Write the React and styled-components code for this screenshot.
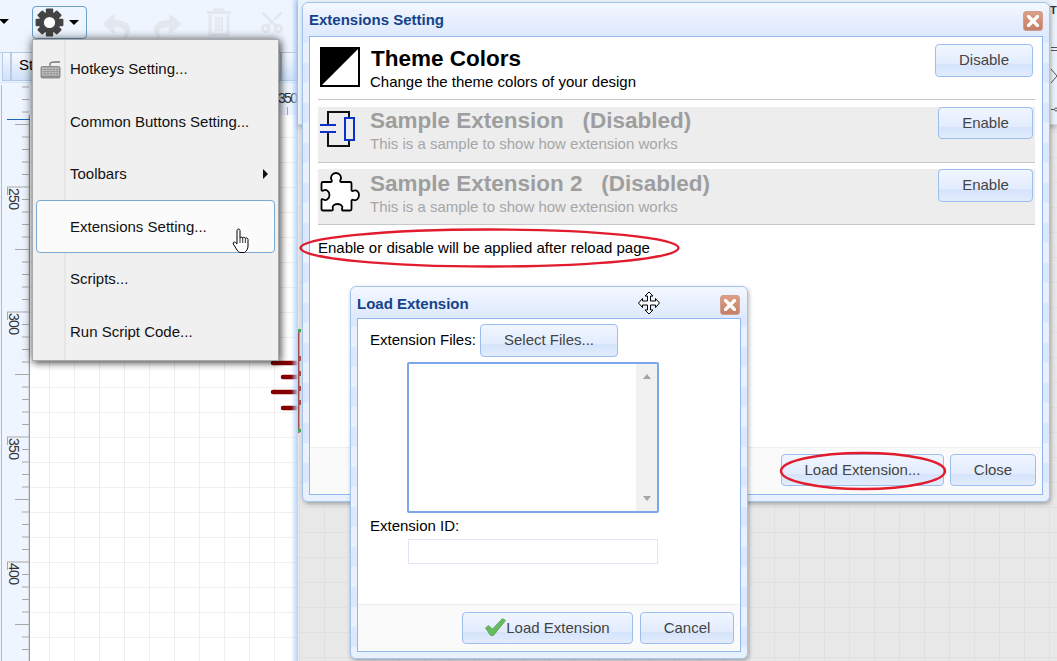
import React from "react";
import styled, { createGlobalStyle } from "styled-components";
import { FaReply, FaShare } from "react-icons/fa";
import { Scissors } from "lucide-react";

const Global = createGlobalStyle`
  html, body { margin: 0; padding: 0; overflow: hidden; background: #fff; }
  body { font-family: "Liberation Sans", Arial, sans-serif; color: #000; }
  * { box-sizing: border-box; }
`;

const Page = styled.div`
  position: relative; width: 1057px; height: 661px; overflow: hidden;
  display: flex; flex-direction: column; background: #fff;
`;

/* ---------- toolbar ---------- */
const Toolbar = styled.div`
  height: 52px; flex: none; background: #eef5ff; display: flex; align-items: flex-start;
`;
const Caret = styled.span`
  display: block; width: 0; height: 0; flex: none;
  border-left: 5px solid transparent; border-right: 5px solid transparent; border-top: 5px solid #000;
`;
const LeadCaret = styled(Caret)`margin: 19px 23px 0 -1px;`;
const GearButton = styled.div`
  width: 55px; height: 33px; margin-top: 6px; flex: none; display: flex; align-items: center; gap: 5px;
  padding-left: 2px; border: 1px solid #6d9fcb; border-radius: 4px;
`;
const ToolIcon = styled.div`
  flex: none; color: #e3e8ee; margin-left: ${(p) => p.$ml}px; margin-top: ${(p) => p.$mt}px; display: flex;
`;
const RotatedScissors = styled(Scissors)`transform: rotate(-90deg);`;

/* ---------- tabs ---------- */
const TabStrip = styled.div`
  height: 33px; flex: none; display: flex; background: linear-gradient(#e9f2ff 0 29px, #d9e7fb 29px 30px, #eef5ff 30px);
  border-top: 1px solid #b5cbe8; padding-left: 2px;
`;
const TabCell = styled.div`
  height: 28px; flex: none; width: ${(p) => p.$w}px; border-left: 1px solid #b5cbe8; border-right: 1px solid #b5cbe8;
  border-bottom: 1px solid #b5cbe8; background: linear-gradient(#f7faff, #cfe1f9);
  font-size: 15px; line-height: 24px; padding-left: 7px; white-space: nowrap; overflow: hidden;
`;

/* ---------- rulers & canvas ---------- */
const TopRuler = styled.div`
  height: 30px; flex: none; background: #eef5ff; padding-left: 2px; display: flex;
`;
const Work = styled.div`flex: 1; display: flex; min-height: 0; margin-top: 0;`;
const SideRuler = styled.div`
  width: 30px; flex: none; background: #eef5ff; margin-top: -30px; height: 576px; padding-left: 1px;
`;
const Canvas = styled.div`
  position: relative; flex: 1; background-color: #fff;
  background-image: linear-gradient(90deg, #eeeeee 1px, transparent 1px), linear-gradient(#f0f0f0 1px, transparent 1px);
  background-size: 25px 25px; background-position: 19px 22px;
`;
const Symbol = styled.svg`position: absolute; left: 240px; top: 210px;`;
const Glow = styled.div`
  position: absolute; left: 291px; top: 0; width: 7px; height: 661px;
  background: linear-gradient(90deg, rgba(184,212,251,0), #b4d2fb);
`;

function VerticalRuler() {
  const ticks = [];
  for (let i = -3; i < 48; i++) {
    const y = 62 + i * 12.5 - 85;
    const kind = ((i % 10) + 10) % 10;
    const x1 = kind === 0 ? 6 : kind === 5 ? 14 : 21;
    ticks.push(<line key={i} x1={x1} x2="28" y1={y} y2={y} stroke="#a8a8a8" strokeWidth="1" />);
  }
  const labels = [[250, 187], [300, 312], [350, 437], [400, 562]];
  return (
    <svg width="29" height="576" viewBox="0 0 29 576">
      <line x1="0.5" x2="0.5" y1="0" y2="576" stroke="#a9bdd9" />
      <line x1="28.5" x2="28.5" y1="30" y2="576" stroke="#9a9a9a" strokeWidth="1.5" />
      <line x1="6" x2="29" y1="34.5" y2="34.5" stroke="#1a66b8" />
      {ticks}
      {labels.map(([t, y]) => (
        <g key={t}>
          <line x1="6.5" x2="6.5" y1={y - 85} y2={y - 77} stroke="#a8a8a8" />
          <text x="0" y="0" fontSize="14" fontFamily="Liberation Sans" fill="#333"
            transform={`translate(8 ${y - 84}) rotate(90)`} textLength="22">{t}</text>
        </g>
      ))}
    </svg>
  );
}

/* ---------- mask behind dialogs ---------- */
const Mask = styled.div`
  position: absolute; left: 298px; top: 0; right: 0; bottom: 0; background-color: #e8e8e8;
  background-image: linear-gradient(90deg, #e0e0e0 1px, transparent 1px), linear-gradient(#e0e0e0 1px, transparent 1px);
  background-size: 25px 25px; background-position: 1px 7px;
`;
const BackPanel = styled.div`
  height: 125px; background: #eaf2fc; border-bottom: 1px solid #cfd9e6; box-shadow: 0 3px 5px rgba(0,0,0,.22);
  display: flex; justify-content: flex-end; overflow: hidden;
`;
const BackTools = styled.div`
  width: 7px; padding-top: 4px; font-size: 11px; font-weight: bold; color: #333; line-height: 13px;
  display: flex; flex-direction: column; flex: none;
`;

/* ---------- windows ---------- */
const Win = styled.div`
  position: absolute; left: ${(p) => p.$x}px; top: ${(p) => p.$y}px; width: ${(p) => p.$w}px; height: ${(p) => p.$h}px;
  display: flex; flex-direction: column; padding: 0 6px 6px;
  border: 1px solid #a4c4ee; border-radius: 6px;
  background: repeating-linear-gradient(180deg, #e9f1ff 0 20px, #dce8fd 20px 40px);
  box-shadow: 1px 2px 4px rgba(0,0,0,.3);
`;
const TitleBar = styled.div`
  height: ${(p) => p.$h}px; flex: none; margin: 0 -6px; padding: ${(p) => p.$pt}px 6px 0;
  display: flex; justify-content: space-between; align-items: flex-start; border-radius: 6px 6px 0 0;
  background: linear-gradient(#f3f7ff, #dde9fd);
`;
const Title = styled.div`
  font-size: 15px; font-weight: bold; color: #15428b; line-height: 18px;
`;
const CloseX = styled.div`
  width: 20px; height: 20px; flex: none; margin-right: ${(p) => p.$mr}px; border-radius: 3px;
  display: flex; align-items: center; justify-content: center;
  background: linear-gradient(#dd9e88, #c47f66); border: 1px solid #cf9f8c;
`;
const Body = styled.div`
  flex: 1; display: flex; flex-direction: column; background: #fff; border: 1px solid #8fb8ec; min-height: 0;
`;
const Rows = styled.div`flex: 1; padding: 7px 7px 0 8px; min-height: 0;`;
const ExtRow = styled.div`
  height: 56px; display: flex; padding-top: ${(p) => p.$pt}px; margin-bottom: ${(p) => p.$mb}px;
  border-bottom: 1px solid #c8c8c8; background: ${(p) => (p.$off ? "#ededed" : "#fff")};
`;
const ExtIcon = styled.div`
  width: 52px; flex: none; padding: ${(p) => 3 - p.$pt}px 0 0 2px; display: flex; align-items: flex-start;
`;
const ExtText = styled.div`flex: 1; min-width: 0;`;
const ExtTitle = styled.div`
  font-size: 22.5px; font-weight: bold; line-height: 28px; white-space: pre; color: ${(p) => (p.$off ? "#9e9e9e" : "#000")};
  margin-left: ${(p) => (p.$off ? 0 : 1)}px;
`;
const ExtSub = styled.div`
  font-size: 15px; line-height: 18px; color: ${(p) => (p.$off ? "#a6a6a6" : "#000")};
`;
const Btn = styled.div`
  flex: none; display: flex; align-items: center; justify-content: center; padding-bottom: 2px;
  width: ${(p) => p.$w}px; height: ${(p) => p.$h}px; margin-right: ${(p) => p.$mr ?? 0}px; margin-top: ${(p) => p.$mt ?? 0}px;
  border: 1px solid #9bbeef; border-radius: 4px; color: #444; font-size: 15px;
  background: linear-gradient(#f1f6ff, #e2ecfe 62%, #d5e4fb 63%, #dce8fc 85%, #e4edfd);
`;
const Note = styled.div`font-size: 15px; line-height: 18px; margin-top: 14px;`;
const Footer = styled.div`
  height: 47px; flex: none; display: flex; justify-content: flex-end; gap: ${(p) => p.$gap}px;
  padding: ${(p) => p.$pt}px 6px 0 0; background: #fafafa; border-top: 1px solid #eeeeee;
`;

/* ---------- load form ---------- */
const Form = styled.div`flex: 1; padding: 5px 0 0 12px; min-height: 0;`;
const FileRow = styled.div`display: flex; align-items: center;`;
const Label = styled.div`
  font-size: 15px; line-height: 18px; width: ${(p) => p.$w}px; flex: none; margin-top: ${(p) => p.$mt ?? 0}px;
`;
const FileBox = styled.div`
  width: 252px; height: 151px; margin: 5px 0 4px 37px; display: flex; justify-content: flex-end;
  border: 2px solid #7aa7ea; border-radius: 2px; background: #fff;
`;
const ScrollTrack = styled.div`
  width: 21px; background: #f1f1f1; display: flex; flex-direction: column; justify-content: space-between; align-items: center; padding: 10px 0;
`;
const ScrollArrow = styled.span`
  display: block; width: 0; height: 0; border-left: 4.5px solid transparent; border-right: 4.5px solid transparent;
  ${(p) => (p.$down ? "border-top: 5px solid #a5a5a5;" : "border-bottom: 5px solid #a5a5a5;")}
`;
const IdInput = styled.div`
  width: 250px; height: 25px; margin: 4px 0 0 38px; border: 1px solid #e3e3f7; background: #fff;
`;

/* ---------- menu ---------- */
const Menu = styled.div`
  position: absolute; left: 32px; top: 39px; width: 247px; height: 322px; padding: 2.5px 3px 0;
  border: 1px solid #a9a9a9; background: linear-gradient(90deg, #f0f0f0 31px, #e6e6e6 31px 33px, #f0f0f0 33px);
  box-shadow: 0 0 9px rgba(0,0,0,.6), 3px 3px 6px rgba(0,0,0,.3);
`;
const MenuItem = styled.div`
  height: 52.5px; display: flex; align-items: center; font-size: 15px; color: #111; position: relative;
  border: 1px solid ${(p) => (p.$hot ? "#7aa9d4" : "transparent")}; border-radius: 4px;
  background: ${(p) => (p.$hot ? "#fbfbfb" : "transparent")};
`;
const MenuSlot = styled.div`width: 33px; flex: none; padding-left: 3px; display: flex; align-items: center;`;
const MenuArrow = styled.span`
  position: absolute; right: 6px; width: 0; height: 0;
  border-top: 5px solid transparent; border-bottom: 5px solid transparent; border-left: 5px solid #111;
`;
const Overlay = styled.svg`position: absolute; left: 0; top: 0; pointer-events: none;`;
const Cursor = styled.svg`position: absolute; left: ${(p) => p.$x}px; top: ${(p) => p.$y}px;`;
const PinEdge = styled.svg`position: absolute; left: 298px; top: 329px;`;

/* ---------- drawings ---------- */
const Gear = () => (
  <svg width="29" height="29" viewBox="0 0 29 29">
    <g fill="#444">
      {[0, 45, 90, 135].map((a) => (
        <rect key={a} x="10.8" y="0.6" width="7.4" height="27.8" rx="1" transform={`rotate(${a} 14.5 14.5)`} />
      ))}
      <circle cx="14.5" cy="14.5" r="10.6" />
    </g>
    <circle cx="14.5" cy="14.5" r="5.6" fill="#fff" />
  </svg>
);
const Trash = () => (
  <svg width="24" height="28" viewBox="0 0 24 28" fill="none" stroke="currentColor">
    <path d="M0 4.5h24" strokeWidth="3" />
    <path d="M8 4V1.5h8V4" strokeWidth="2.5" />
    <path d="M3 7v19.5h18V7" strokeWidth="3" />
    <path d="M9 9v14M12 9v14M15 9v14" strokeWidth="2" />
  </svg>
);
const Keyboard = () => (
  <svg width="21" height="20" viewBox="0 0 21 20">
    <path d="M10 7V5c0-2 2-2 5-2h5" fill="none" stroke="#777" strokeWidth="1.3" />
    <rect x="0.5" y="7" width="20" height="12.5" rx="2" fill="#8f8f8f" />
    <rect x="2" y="8.5" width="17" height="8" fill="#c9c9c9" />
    <path d="M2 10.5h17M2 12.6h17M2 14.7h17M5 8.5v8M8 8.5v8M11 8.5v8M14 8.5v8M17 8.5v8" stroke="#8b8b8b" strokeWidth=".7" />
  </svg>
);
const ThemeIcon = () => (
  <svg width="40" height="40" viewBox="0 0 40 40">
    <rect x="1" y="1" width="38" height="38" fill="#fff" stroke="#000" strokeWidth="2" />
    <path d="M1 1h38L1 39z" fill="#000" />
  </svg>
);
const CapIcon = () => (
  <svg width="36" height="38" viewBox="0 0 36 38" fill="none" strokeWidth="2">
    <path d="M29 7V2H8v13M8 23v13h21v-6" stroke="#111" />
    <rect x="25" y="8" width="9" height="22" stroke="#0a32c8" />
    <path d="M0 15h16M0 22h16" stroke="#0a32c8" />
  </svg>
);
const PuzzleIcon = () => (
  <svg width="40" height="40" viewBox="0 0 40 40">
    <path
      fill="#fff" stroke="#000" strokeWidth="1.8" strokeLinejoin="round"
      d="M3 10H11c1 0 1-1 .5-2C10 5 12 1 16 1s6 4 4.5 7c-.5 1-.5 2 .5 2H30c1 0 1.500.5 1.500 1.500V18c0 1 1 1.300 2 .8C36 17.500 39 19 39 23s-3 6-5.500 5c-1-.5-2-.2-2 .8V37c0 1-.5 1.500-1.500 1.500H23c-1 0-1.300-1-.8-2C23 34 21 32 17.500 32S12 34 12.800 36.500c.4 1 0 2-1 2H3c-1 0-1.500-.5-1.500-1.500V28c0-1 1-1.300 2-.5C6 29 9.500 27 9.500 23S6 17 3.500 18.500c-1 .5-2 .2-2-.8V11.500C1.500 10.500 2 10 3 10Z"
    />
  </svg>
);
const CloseGlyph = () => (
  <svg width="12" height="12" viewBox="0 0 12 12">
    <path d="M1.500 1.500l9 9M10.500 1.500l-9 9" stroke="#fff" strokeWidth="3.2" strokeLinecap="round" />
  </svg>
);
const Check = () => (
  <svg width="21" height="18" viewBox="0 0 21 18">
    <path d="M0.500 10L3.500 7.500L7.500 11L17.500 .5L20.500 2.500L8.500 17.500H5.500Z" fill="#63bd5a" stroke="#5f9a66" strokeWidth=".8" />
  </svg>
);
const BackGlyphs = () => (
  <svg width="7" height="100" viewBox="0 0 7 100" fill="none" stroke="#555">
    <path d="M1 30.500h6M1 33.500h6" />
    <path d="M1 52l6 7-6 7" />
    <path d="M1 92.500h3" />
    <circle cx="6" cy="92.500" r="1.500" />
  </svg>
);

const Ext = ({ off, icon, title, sub, btn, btnW, btnH, pt, mb }) => (
  <ExtRow $off={off} $pt={pt} $mb={mb}>
    <ExtIcon $pt={pt}>{icon}</ExtIcon>
    <ExtText>
      <ExtTitle $off={off}>{title}</ExtTitle>
      <ExtSub $off={off}>{sub}</ExtSub>
    </ExtText>
    <Btn $w={btnW} $h={btnH} $mr={2} $mt={-pt}>{btn}</Btn>
  </ExtRow>
);

export default function App() {
  return (
    <Page>
      <Global />
      <Toolbar>
        <LeadCaret />
        <GearButton>
          <Gear />
          <Caret />
        </GearButton>
        <ToolIcon $ml={16} $mt={13}><FaReply size={27} /></ToolIcon>
        <ToolIcon $ml={24} $mt={13}><FaShare size={27} /></ToolIcon>
        <ToolIcon $ml={26} $mt={8}><Trash /></ToolIcon>
        <ToolIcon $ml={28} $mt={9}><RotatedScissors size={26} strokeWidth={2.6} /></ToolIcon>
      </Toolbar>

      <TabStrip>
        <TabCell $w={9} />
        <TabCell $w={270}>Start</TabCell>
        <TabCell $w={17} />
      </TabStrip>

      <TopRuler>
        <svg width="1040" height="30" viewBox="0 0 1040 30">
          <text x="276" y="18" fontSize="14" fontFamily="Liberation Sans" fill="#333" textLength="20">350</text>
          <line x1="285.500" x2="285.500" y1="22" y2="30" stroke="#aaa" />
        </svg>
      </TopRuler>

      <Work>
        <SideRuler><VerticalRuler /></SideRuler>
        <Canvas>
          <Symbol width="35" height="110" viewBox="0 0 35 110">
            <g stroke="#860000" strokeWidth="4.500" strokeLinecap="round">
              <line x1="3" x2="30" y1="38" y2="38" />
              <line x1="13" x2="30" y1="52" y2="52" />
              <line x1="3" x2="30" y1="67" y2="67" />
              <line x1="13" x2="30" y1="83" y2="83" />
            </g>
          </Symbol>
        </Canvas>
      </Work>

      <Glow />
      <Mask>
        <BackPanel>
          <BackTools>
            <span>T</span>
            <BackGlyphs />
          </BackTools>
        </BackPanel>
      </Mask>
      <PinEdge width="4" height="104" viewBox="0 0 4 104">
        <rect x="0" y="0" width="1.500" height="104" fill="#a55050" />
        <rect x="0" y="0" width="3" height="3" fill="#4aaa55" />
        <rect x="0" y="100" width="3" height="3" fill="#4aaa55" />
        <rect x="0" y="27" width="3" height="5" fill="#a55050" />
        <rect x="0" y="42" width="3" height="5" fill="#a55050" />
        <rect x="0" y="57" width="3" height="5" fill="#a55050" />
        <rect x="0" y="71" width="3" height="5" fill="#a55050" />
      </PinEdge>

      <Win $x={302} $y={2} $w={748} $h={500}>
        <TitleBar $h={33} $pt={8}>
          <Title>Extensions Setting</Title>
          <CloseX $mr={0}><CloseGlyph /></CloseX>
        </TitleBar>
        <Body>
          <Rows>
            <Ext icon={<ThemeIcon />} title="Theme Colors" sub="Change the theme colors of your design"
              btn="Disable" btnW={98} btnH={33} pt={1} mb={7} />
            <Ext off icon={<CapIcon />} title={"Sample Extension   (Disabled)"} sub="This is a sample to show how extension works"
              btn="Enable" btnW={95} btnH={32} pt={0} mb={6} />
            <Ext off icon={<PuzzleIcon />} title={"Sample Extension 2   (Disabled)"} sub="This is a sample to show how extension works"
              btn="Enable" btnW={95} btnH={33} pt={1} mb={0} />
            <Note>Enable or disable will be applied after reload page</Note>
          </Rows>
          <Footer $gap={6} $pt={6}>
            <Btn $w={163} $h={32}>Load Extension...</Btn>
            <Btn $w={86} $h={32}>Close</Btn>
          </Footer>
        </Body>
      </Win>

      <Win $x={350} $y={286} $w={398} $h={373}>
        <TitleBar $h={31} $pt={8}>
          <Title>Load Extension</Title>
          <CloseX $mr={1}><CloseGlyph /></CloseX>
        </TitleBar>
        <Body>
          <Form>
            <FileRow>
              <Label $w={110} $mt={-2}>Extension Files:</Label>
              <Btn $w={138} $h={33}>Select Files...</Btn>
            </FileRow>
            <FileBox>
              <ScrollTrack>
                <ScrollArrow />
                <ScrollArrow $down />
              </ScrollTrack>
            </FileBox>
            <Label $w={200}>Extension ID:</Label>
            <IdInput />
          </Form>
          <Footer $gap={7} $pt={7}>
            <Btn $w={171} $h={32}><Check />Load Extension</Btn>
            <Btn $w={94} $h={32}>Cancel</Btn>
          </Footer>
        </Body>
      </Win>

      <Menu>
        <MenuItem><MenuSlot><Keyboard /></MenuSlot>Hotkeys Setting...</MenuItem>
        <MenuItem><MenuSlot />Common Buttons Setting...</MenuItem>
        <MenuItem><MenuSlot />Toolbars<MenuArrow /></MenuItem>
        <MenuItem $hot><MenuSlot />Extensions Setting...</MenuItem>
        <MenuItem><MenuSlot />Scripts...</MenuItem>
        <MenuItem><MenuSlot />Run Script Code...</MenuItem>
      </Menu>

      <Overlay width="1057" height="661" viewBox="0 0 1057 661" fill="none" stroke="#e21c2e" strokeWidth="2.400">
        <ellipse cx="489.500" cy="248" rx="189" ry="18.500" />
        <ellipse cx="863" cy="471" rx="82" ry="18" />
      </Overlay>

      <Cursor $x={232} $y={228} width="19" height="26" viewBox="0 0 19 26">
        <path fill="#fff" stroke="#000" strokeWidth="1"
          d="M6.500 1c.9 0 1.500.7 1.500 1.600v7.400c0-1 2.500-1.200 2.700.1 0-1 2.400-1.100 2.600.3.200-.8 2.700-.6 2.700 1v6.600c0 2.500-1.200 5-3.500 6.500H9c-2 0-3-1-4-2.500L1.300 16c-.8-1.500 1-2.600 2.300-1.400L5 16V2.600C5 1.700 5.600 1 6.500 1z" />
        <path d="M8 10v5M10.700 10v5M13.300 11v4" stroke="#000" strokeWidth=".8" fill="none" />
      </Cursor>
      <Cursor $x={637} $y={291} width="24" height="24" viewBox="0 0 24 24">
        <path fill="#fff" stroke="#000" strokeWidth="1"
          d="M12 1l4 4h-2.500v5h5V7.500l4 4.500-4 4.500V14h-5v5H16l-4 4-4-4h2.500v-5h-5v2.500l-4-4.500 4-4.500V10h5V5H8z" />
      </Cursor>
    </Page>
  );
}
